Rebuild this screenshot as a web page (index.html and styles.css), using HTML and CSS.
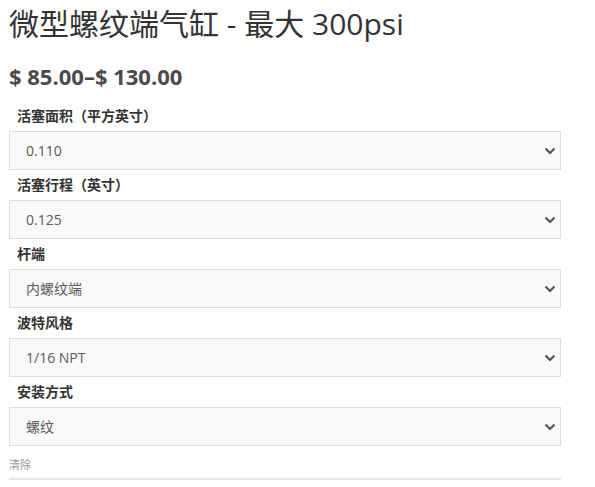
FILE: index.html
```html
<!DOCTYPE html>
<html lang="zh">
<head>
  <meta charset="UTF-8" />
  <meta name="viewport" content="width=device-width, initial-scale=1" />
  <title>微型螺纹端气缸 - 最大 300psi</title>
  <link rel="stylesheet" href="styles.css">
</head>
<body>

  <h1 class="product-title">微型螺纹端气缸 - 最大 300psi</h1>
  <p class="price">$ 85.00–$ 130.00</p>

  <form class="variations">
    <div class="field">
      <label for="area">活塞面积（平方英寸）</label>
      <div class="select-wrap">
        <select id="area"><option>0.110</option></select>
        <svg class="chevron" width="12" height="8" viewBox="0 0 12 8"><path d="M1.5 1.5 L6 6 L10.5 1.5" fill="none" stroke="#555" stroke-width="2.2"/></svg>
      </div>
    </div>

    <div class="field">
      <label for="stroke">活塞行程（英寸）</label>
      <div class="select-wrap">
        <select id="stroke"><option>0.125</option></select>
        <svg class="chevron" width="12" height="8" viewBox="0 0 12 8"><path d="M1.5 1.5 L6 6 L10.5 1.5" fill="none" stroke="#555" stroke-width="2.2"/></svg>
      </div>
    </div>

    <div class="field">
      <label for="rod">杆端</label>
      <div class="select-wrap">
        <select id="rod"><option>内螺纹端</option></select>
        <svg class="chevron" width="12" height="8" viewBox="0 0 12 8"><path d="M1.5 1.5 L6 6 L10.5 1.5" fill="none" stroke="#555" stroke-width="2.2"/></svg>
      </div>
    </div>

    <div class="field">
      <label for="port">波特风格</label>
      <div class="select-wrap">
        <select id="port"><option>1/16 NPT</option></select>
        <svg class="chevron" width="12" height="8" viewBox="0 0 12 8"><path d="M1.5 1.5 L6 6 L10.5 1.5" fill="none" stroke="#555" stroke-width="2.2"/></svg>
      </div>
    </div>

    <div class="field">
      <label for="mount">安装方式</label>
      <div class="select-wrap">
        <select id="mount"><option>螺纹</option></select>
        <svg class="chevron" width="12" height="8" viewBox="0 0 12 8"><path d="M1.5 1.5 L6 6 L10.5 1.5" fill="none" stroke="#555" stroke-width="2.2"/></svg>
      </div>
    </div>

    <div class="reset-row">
      <a href="#" class="reset">清除</a>
    </div>
  </form>

</body>
</html>
```

FILE: styles.css
```css
body {
  font-family: 'Open Sans', 'Noto Sans CJK SC', sans-serif;
  margin: 0;
  padding: 0 9px;
  background-color: #fff;
  color: #333;
  width: 552px;
}

.product-title {
  margin: 0;
  font-size: 30px;
  font-weight: 400;
  line-height: 48px;
  color: #333;
}

.price {
  margin: 13px 0 10px;
  font-size: 22px;
  font-weight: 700;
  line-height: 30px;
  color: #4a4a4a;
}

.variations {
  margin: 0;
}

.field label {
  display: block;
  padding: 5px 8px;
  font-size: 14px;
  font-weight: 700;
  line-height: 20px;
  color: #333;
}

.select-wrap {
  position: relative;
}

.select-wrap select {
  display: block;
  width: 100%;
  height: 39px;
  margin: 0;
  padding: 0 16px;
  border: 1px solid #ddd;
  border-radius: 0;
  background-color: #f9f9f9;
  font-family: 'Open Sans', 'Noto Sans CJK SC', sans-serif;
  font-size: 14px;
  color: #5a5a5a;
  -webkit-appearance: none;
  appearance: none;
}

.chevron {
  position: absolute;
  right: 5px;
  top: 16px;
  pointer-events: none;
}

.reset-row {
  margin-top: 9px;
  padding-bottom: 5px;
  border-bottom: 2px solid #e8e8e8;
  line-height: 16px;
}

.reset {
  font-size: 11px;
  color: #999;
  text-decoration: none;
}
```
